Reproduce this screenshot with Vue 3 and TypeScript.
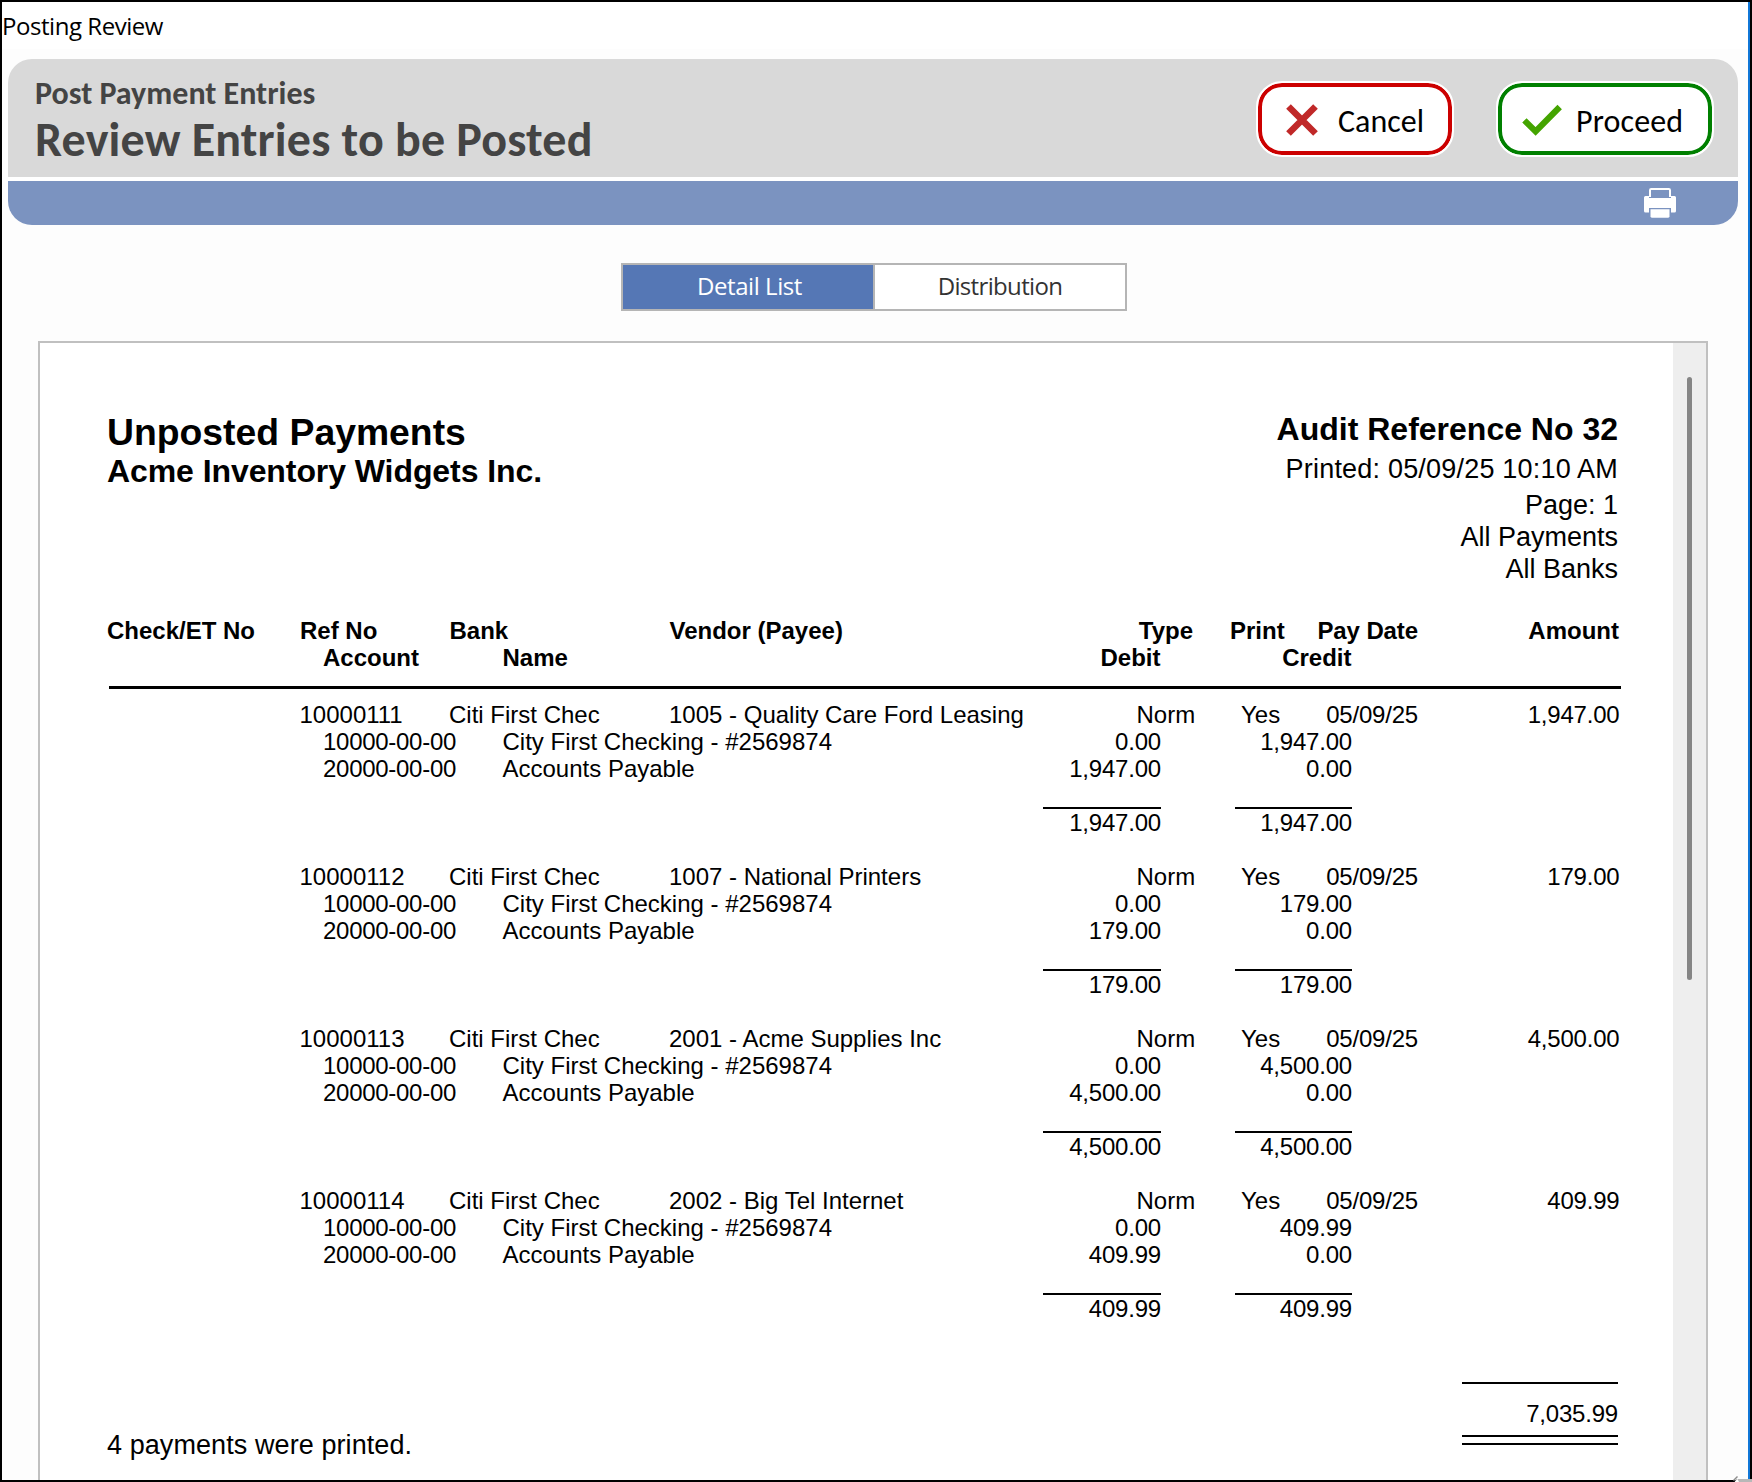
<script setup lang="ts">
interface Line {
  account: string
  name: string
  debit: string
  credit: string
}
interface Payment {
  ref: string
  bank: string
  vendor: string
  amount: string
  lines: Line[]
}

const entries: [string, string, string][] = [
  ['10000111', '1005 - Quality Care Ford Leasing', '1,947.00'],
  ['10000112', '1007 - National Printers', '179.00'],
  ['10000113', '2001 - Acme Supplies Inc', '4,500.00'],
  ['10000114', '2002 - Big Tel Internet', '409.99'],
]

const payments: Payment[] = entries.map(([ref, vendor, amount]) => ({
  ref,
  vendor,
  amount,
  bank: 'Citi First Chec',
  lines: [
    { account: '10000-00-00', name: 'City First Checking - #2569874', debit: '0.00', credit: amount },
    { account: '20000-00-00', name: 'Accounts Payable', debit: amount, credit: '0.00' },
  ],
}))
</script>

<template>
  <div class="window">
    <div class="titlebar">Posting Review</div>
    <main class="body">
      <header class="banner">
        <div class="headings">
          <div class="kicker">Post Payment Entries</div>
          <h1>Review Entries to be Posted</h1>
        </div>
        <div class="actions">
          <button class="btn cancel">
            <svg width="32" height="32" viewBox="0 0 32 32">
              <path d="M2.5 2.5L29.5 29.5M29.5 2.5L2.5 29.5" stroke="#c02828" stroke-width="6.6" fill="none" />
            </svg>
            <span>Cancel</span>
          </button>
          <button class="btn proceed">
            <svg width="40" height="32" viewBox="0 0 40 32">
              <path d="M2.4 16.4L13.6 27.4L37.7 3" stroke="#44a400" stroke-width="6.2" fill="none" />
            </svg>
            <span>Proceed</span>
          </button>
        </div>
      </header>
      <div class="toolbar">
        <svg class="printer" width="32" height="30" viewBox="0 0 32 30">
          <path d="M6 9V2.2Q6 1 7.2 1H24.8Q26 1 26 2.2V9" fill="none" stroke="#fff" stroke-width="2" />
          <path d="M1.5 8H5V10H27V8H30.5Q32 8 32 9.5V23Q32 24.5 30.5 24.5H27V20H5V24.5H1.5Q0 24.5 0 23V9.5Q0 8 1.5 8Z" fill="#fff" />
          <path d="M6.5 21.3H25.5V28.3Q25.5 29.7 24.2 29.7H7.8Q6.5 29.7 6.5 28.3Z" fill="#fff" />
        </svg>
      </div>

      <nav class="tabs">
        <div class="tab active">Detail List</div>
        <div class="tab">Distribution</div>
      </nav>

      <section class="viewer">
        <article class="report">
          <div class="report-head">
            <div>
              <div class="report-title">Unposted Payments</div>
              <div class="company">Acme Inventory Widgets Inc.</div>
            </div>
            <div class="meta">
              <div class="audit">Audit Reference No 32</div>
              <div class="printed">Printed: 05/09/25 10:10 AM</div>
              <div class="page">Page: 1</div>
              <div>All Payments</div>
              <div>All Banks</div>
            </div>
          </div>

          <div class="columns">
            <div class="row main">
              <span>Check/ET No</span><span>Ref No</span><span>Bank</span><span>Vendor (Payee)</span>
              <span class="num">Type</span><span class="print">Print</span><span class="num date">Pay Date</span><span class="num">Amount</span>
            </div>
            <div class="row sub">
              <span>Account</span><span>Name</span><span class="num">Debit</span><span class="num">Credit</span>
            </div>
          </div>

          <div v-for="p in payments" :key="p.ref" class="payment">
            <div class="row main">
              <span></span><span>{{ p.ref }}</span><span>{{ p.bank }}</span><span>{{ p.vendor }}</span>
              <span class="type">Norm</span><span class="yes">Yes</span><span class="num">05/09/25</span><span class="num">{{ p.amount }}</span>
            </div>
            <div v-for="l in p.lines" :key="l.account" class="row sub">
              <span class="account">{{ l.account }}</span><span>{{ l.name }}</span>
              <span class="num">{{ l.debit }}</span><span class="num">{{ l.credit }}</span>
            </div>
            <div class="totals">
              <span>{{ p.amount }}</span><span>{{ p.amount }}</span>
            </div>
          </div>

          <footer class="report-foot">
            <div class="count">4 payments were printed.</div>
            <div class="grand">
              <div class="grand-value">7,035.99</div>
            </div>
          </footer>
        </article>
        <div class="gutter"><div class="thumb"></div></div>
      </section>
    </main>
    <svg class="grip" width="19" height="6" viewBox="0 0 19 6">
      <path d="M3 3H19V6H2Z" fill="#b8b8b8" />
      <path d="M1.5 6L4.5 3L6 6Z" fill="#fff" />
      <path d="M0.5 4.5L4.5 0.5" stroke="#8c8c8c" stroke-width="1.4" />
    </svg>
  </div>
</template>

<style>
html,
body {
  margin: 0;
  overflow: hidden;
}
</style>

<style scoped>
* {
  box-sizing: border-box;
}
.window {
  position: relative;
  width: 1752px;
  height: 1482px;
  border: 2px solid #000;
  background: #fff;
  display: flex;
  flex-direction: column;
}
.titlebar {
  height: 47px;
  flex: none;
  font: 24px/48px "Open Sans", sans-serif;
  letter-spacing: -0.45px;
  color: #000;
  border-right: 2px solid #1177d7;
}
.body {
  flex: 1;
  min-height: 0;
  overflow: hidden;
  background: #fdfdfd;
  border-right: 2px solid #1177d7;
  padding: 10px 10px 0 6px;
  display: flex;
  flex-direction: column;
}
.banner {
  height: 118px;
  flex: none;
  background: #d9d9d9;
  border-radius: 24px 24px 0 0;
  display: flex;
  justify-content: space-between;
  padding: 0 24px 0 27px;
}
.headings {
  font-family: Carlito, Calibri, Lato, sans-serif;
  font-weight: 700;
  color: #444;
  white-space: nowrap;
}
.kicker {
  font-size: 32px;
  line-height: 40px;
  padding-top: 15px;
}
h1 {
  margin: 0;
  font-size: 48px;
  line-height: 52px;
  letter-spacing: 0.19px;
}
.actions {
  display: flex;
  gap: 42px;
  padding-top: 22px;
}
.btn {
  height: 76px;
  border: 2px solid #fff;
  border-radius: 26px;
  background: #fff;
  display: flex;
  align-items: center;
  font: 32px/40px Carlito, Calibri, Lato, sans-serif;
  color: #000;
}
.btn span {
  padding-top: 4px;
}
.cancel {
  width: 198px;
  box-shadow: inset 0 0 0 4px #cc0000;
  padding: 2px 0 0 28px;
  gap: 20px;
}
.proceed {
  width: 218px;
  box-shadow: inset 0 0 0 4px #008000;
  padding: 2px 0 0 24px;
  gap: 14px;
}
.proceed span {
  letter-spacing: 0.15px;
}
.toolbar {
  height: 48px;
  flex: none;
  border-top: 4px solid #fff;
  background: #7b93c0;
  background-clip: padding-box;
  border-radius: 0 0 24px 24px;
  display: flex;
  justify-content: flex-end;
  padding: 7px 62px 0 0;
}
.tabs {
  margin: 38px 0 0 613px;
  width: 506px;
  height: 48px;
  flex: none;
  border: 2px solid #b5b5b5;
  background: #fff;
  display: flex;
  font: 24px/42px "Open Sans", sans-serif;
  letter-spacing: -0.65px;
}
.tab {
  width: 250px;
  text-align: center;
  color: #333;
}
.tab.active {
  width: 252px;
  background: #5577b5;
  color: #fff;
  border-right: 2px solid #b5b5b5;
  padding-left: 3px;
  letter-spacing: -0.45px;
}
.viewer {
  margin: 30px 30px 0 30px;
  flex: 1;
  min-height: 0;
  width: 1670px;
  border: 2px solid #c0c0c0;
  border-bottom: 0;
  background: #fff;
  display: flex;
}
.gutter {
  width: 33px;
  background: #eeeeee;
  padding: 34px 0 0 14px;
}
.thumb {
  width: 5px;
  height: 603px;
  border-radius: 3px;
  background: #858585;
}
.report {
  width: 1633px;
  padding-left: 67px;
  font: 24px/27px "Liberation Sans", Arial, sans-serif;
  color: #000;
  white-space: nowrap;
}
.report-head {
  height: 274px;
  width: 1511px;
  padding-top: 64px;
  display: flex;
  justify-content: space-between;
}
.report-title {
  font-size: 37.33px;
  line-height: 50px;
  font-weight: 700;
}
.company {
  font-size: 32px;
  line-height: 28px;
  font-weight: 700;
  letter-spacing: -0.08px;
}
.meta {
  text-align: right;
  font-size: 27px;
  line-height: 32px;
}
.audit {
  font-size: 32px;
  line-height: 44px;
  font-weight: 700;
}
.printed {
  letter-spacing: 0.2px;
  line-height: 36px;
}
.page {
  line-height: 36px;
  margin-bottom: -2px;
}
.columns {
  width: 1514px;
  height: 72px;
  font-weight: 700;
  background: linear-gradient(#000, #000) 2px 100% / 1512px 3px no-repeat;
}
.row {
  display: grid;
  height: 27px;
}
.row.main {
  width: 1513px;
  grid-template-columns: 192.5px 149.5px 220px 399px 127px 87px 136px 201.5px;
}
.row.sub {
  padding-left: 216px;
  grid-template-columns: 179.5px 400px 258.5px 191px;
}
.num {
  text-align: right;
}
.payment .num {
  letter-spacing: -0.2px;
}
.type {
  padding-left: 68.5px;
}
.columns .row.main {
  grid-template-columns: 193px 149.5px 220px 399.5px 124px 54px 171px 201px;
}
.columns .print {
  padding-left: 37px;
}
.columns .date {
  letter-spacing: -0.1px;
}
.columns .row.sub .num {
  padding-right: 0.5px;
}
.yes {
  padding-left: 46px;
}
.account {
  letter-spacing: -0.28px;
}
.payment {
  height: 162px;
  padding-top: 12px;
  width: 1512px;
}
.totals {
  margin: 25px 0 0 936px;
  display: flex;
  gap: 75px;
  text-align: right;
  letter-spacing: -0.2px;
}
.totals span {
  width: 117px;
  height: 29px;
  border-top: 2px solid #000;
  text-indent: -4px;
  direction: ltr;
}
.totals span:first-child {
  width: 118px;
  margin-right: -1px;
}
.report-foot {
  display: flex;
  justify-content: space-between;
  width: 1511px;
}
.count {
  font-size: 27px;
  line-height: 30px;
  letter-spacing: 0.08px;
  padding-top: 93px;
}
.grand {
  width: 156px;
  margin-top: 45px;
  text-align: right;
  letter-spacing: -0.2px;
}
.grand-value {
  height: 55px;
  padding-top: 16px;
  border-top: 2px solid #000;
  border-bottom: 2px solid #000;
}
.grand::after {
  content: "";
  display: block;
  height: 6px;
  border-bottom: 2px solid #000;
}
.grip {
  position: absolute;
  right: -2px;
  bottom: -2px;
}
</style>
